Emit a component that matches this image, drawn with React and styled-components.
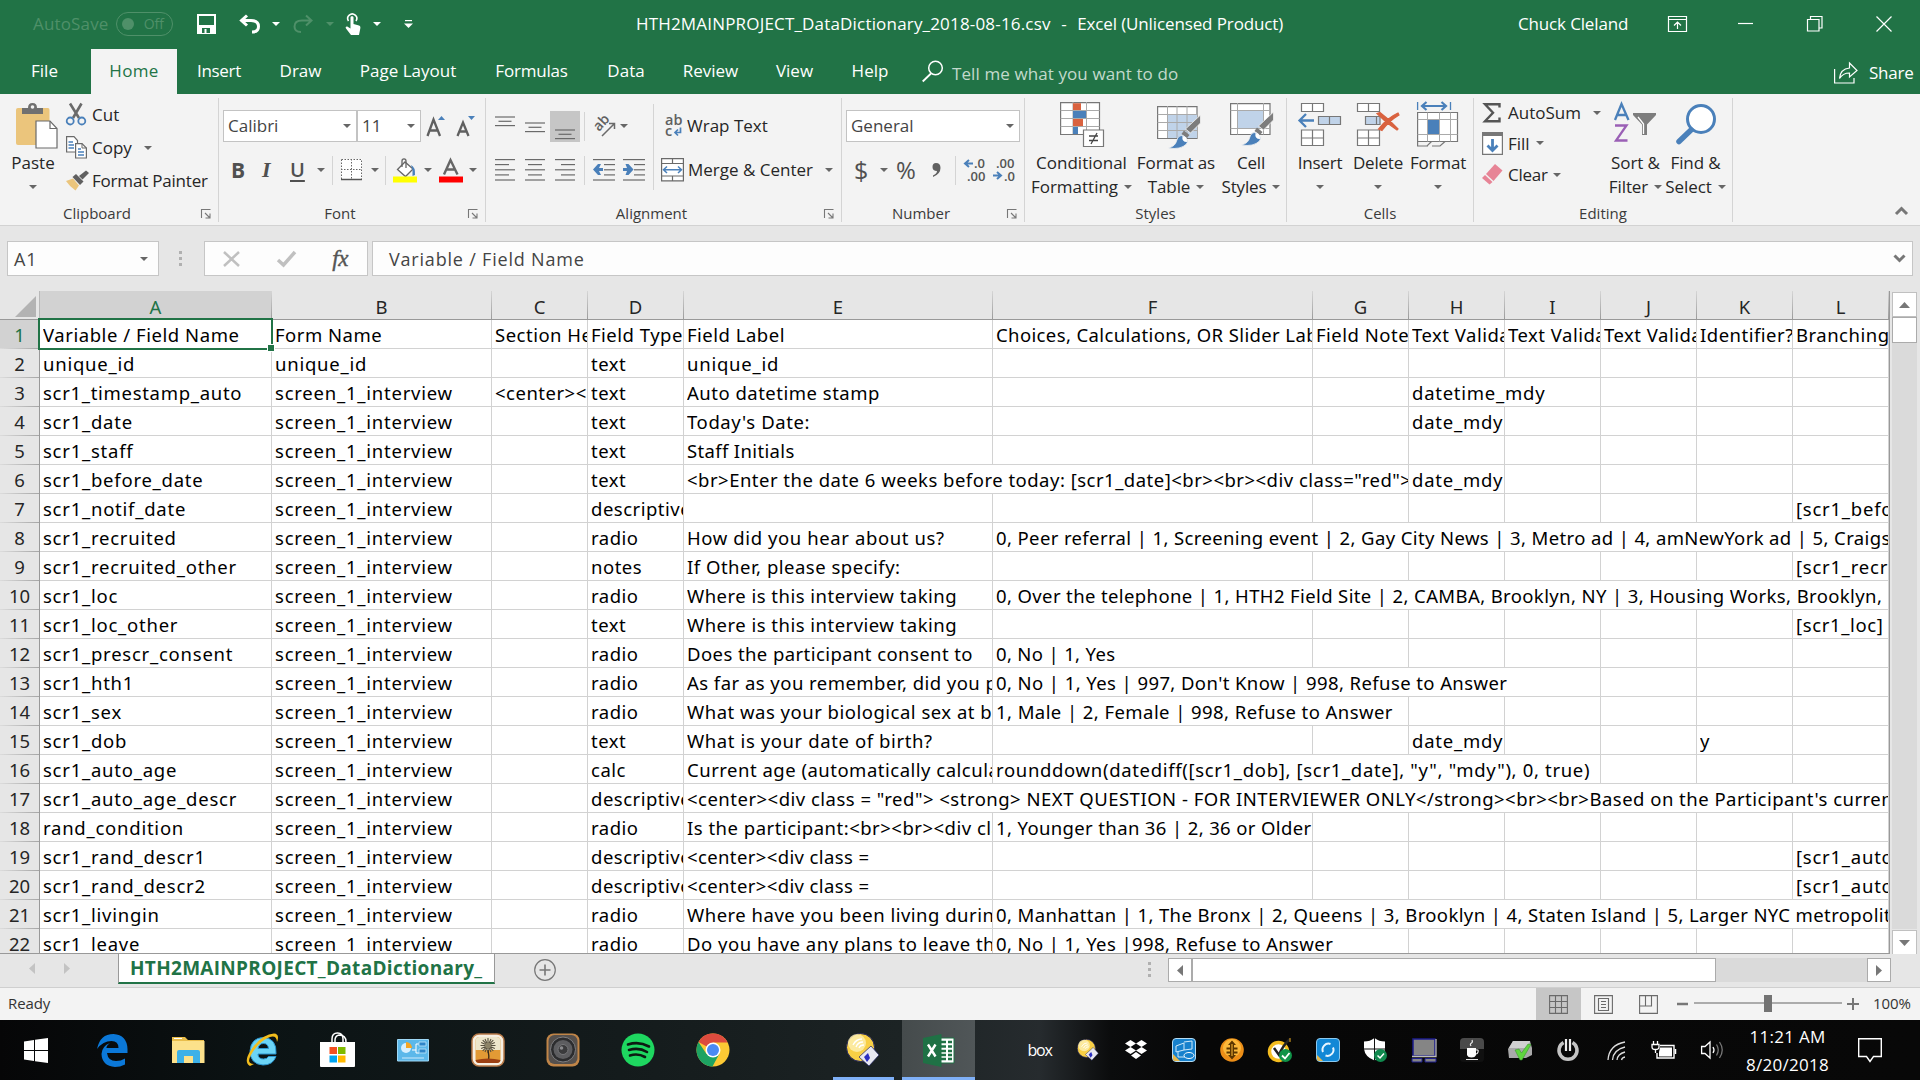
import React from "react";
import styled, { createGlobalStyle, css } from "styled-components";

const ui = '"Open Sans", "Noto Sans", sans-serif';
const cellFont = '"Noto Sans", "Open Sans", sans-serif';
const green = "#217346";
const gray = "#6a6a6a";
const blue = "#4a80ba";

const Global = createGlobalStyle`
  * { box-sizing: border-box; }
  body { margin: 0; background: #e6e6e6; overflow: hidden; }
  svg { display: block; flex: none; overflow: visible; }
`;

const Screen = styled.div`
  width: 1920px;
  height: 1080px;
  display: flex;
  flex-direction: column;
  font: 17px ${ui};
  color: #262626;
  white-space: pre;
  overflow: hidden;
`;

/* ---------- shared ---------- */
const Caret = styled.span`
  width: 0;
  height: 0;
  flex: none;
  border-left: 4px solid transparent;
  border-right: 4px solid transparent;
  border-top: 4px solid ${(p) => p.$color || "#666"};
`;

/* ---------- title bar ---------- */
const TitleBar = styled.header`
  height: 49px;
  background: ${green};
  color: #fff;
  display: grid;
  grid-template-columns: 33px 83px 81px 42px 33px 21px 33px 19px 28px 31px 232px 882px 150px 70px 69px 69px 44px;
  align-items: center;
  line-height: 24px;
  padding-bottom: 2px;
`;
const Faded = styled.span`
  color: #4f9069;
  font-size: 17px;
  letter-spacing: 0.15px;
`;
const Toggle = styled.span`
  width: 57px;
  height: 24px;
  border: 1.5px solid #4f9069;
  border-radius: 12px;
  color: #4f9069;
  font-size: 14px;
  line-height: 21px;
  display: flex;
  align-items: center;
  justify-content: space-between;
  padding: 0 8px 0 5px;
  &::before {
    content: "";
    width: 12px;
    height: 12px;
    border-radius: 50%;
    background: #4f9069;
  }
`;
const DocTitle = styled.span`
  display: flex;
  gap: 10.5px;
`;
const DocName = styled.span`
  letter-spacing: 0.18px;
`;
const Product = styled.span`
  letter-spacing: -0.12px;
`;
const UserName = styled.span`
  letter-spacing: -0.15px;
`;

/* ---------- tabs ---------- */
const TabBar = styled.nav`
  height: 45px;
  background: ${green};
  color: #fff;
  display: grid;
  grid-template-columns: 89px 2px 86px 84px 79px 136px 111px 78px 91px 77px 74px 15px 30px 882px 35px 51px;
  line-height: 44px;
`;
const Tab = styled.span`
  text-align: center;
  letter-spacing: ${(p) => p.$ls || 0}px;
  ${(p) => p.$active && css`background: #f3f3f3; color: ${green}; grid-column: 3;`}
`;
const SearchText = styled.span`
  color: #c3dacc;
  padding-top: 3px;
  letter-spacing: 0.1px;
`;
const TabIcon = styled.span`
  padding-top: ${(p) => p.$top}px;
`;
const Share = styled.span`
  padding-top: 2px;
  letter-spacing: -0.2px;
`;

/* ---------- ribbon ---------- */
const Ribbon = styled.section`
  height: 132px;
  background: #f3f3f3;
  border-bottom: 1px solid #d2d2d2;
  display: grid;
  grid-template-columns: 219px 267px 356px 183px 262px 187px 259px 187px;
  padding: 4px 0 3px;
`;
const Group = styled.div`
  border-right: 1px solid #d4d4d4;
  display: grid;
  grid-template-rows: 104px 20px;
`;
const GroupBody = styled.div`
  display: grid;
  grid-template-columns: ${(p) => p.$cols};
  min-width: 0;
`;
const GroupFoot = styled.div`
  display: grid;
  grid-template-columns: ${(p) => (p.$launch ? "1fr 17px" : "1fr")};
  font-size: 15px;
  line-height: 22px;
  text-align: center;
  color: #3b3b3b;
  svg { margin-top: 7px; }
`;
const GroupName = styled.span`
  padding-right: ${(p) => (p.$launch ? 7 : 0)}px;
`;
const LargeButton = styled.div`
  display: flex;
  flex-direction: column;
  align-items: center;
  line-height: 24px;
  letter-spacing: ${(p) => p.$ls || 0}px;
`;
const LargeIcon = styled.div`
  height: 53px;
  padding: ${(p) => p.$top || 5}px 0 0 ${(p) => p.$left || 0}px;
`;
const ButtonLine = styled.div`
  display: flex;
  align-items: center;
  gap: 6px;
  height: 24px;
`;
const SmallStack = styled.div`
  display: grid;
  grid-template-rows: ${(p) => p.$rows};
`;
const SmallButton = styled.div`
  display: grid;
  grid-template-columns: 26px max-content auto;
  align-items: center;
  justify-content: start;
  letter-spacing: ${(p) => p.$ls || 0}px;
`;
const PadCaret = styled.span`
  padding-left: ${(p) => p.$pad}px;
  display: flex;
`;
const ToolRows = styled.div`
  display: grid;
  grid-template-rows: 32px 30px;
  row-gap: 13px;
  padding-top: 12px;
  align-content: start;
`;
const ToolRow = styled.div`
  display: grid;
  grid-template-columns: ${(p) => p.$cols};
  align-items: center;
`;
const ToolText = styled.span`
  padding-bottom: 2px;
`;
const Combo = styled.div`
  height: 32px;
  border: 1px solid #c3c3c3;
  background: #fff;
  color: #444;
  display: flex;
  align-items: center;
  justify-content: space-between;
  line-height: 22px;
  padding: 0 5px 1px 4px;
`;
const Divider = styled.span`
  width: 1px;
  height: 29px;
  background: #d4d4d4;
`;
const Pressed = styled.span`
  width: 30px;
  height: 31px;
  background: #c6c6c6;
  display: flex;
  align-items: center;
  justify-content: center;
`;
const Glyph = styled.span`
  font: ${(p) => p.$font};
  color: #505050;
  line-height: 26px;
  ${(p) => p.$under && css`text-decoration: underline; text-underline-offset: 3px; text-decoration-thickness: 1.5px;`}
`;
const TallDivider = styled.div`
  margin-top: 6px;
  width: 1px;
  height: 86px;
  background: #d4d4d4;
`;
const Collapse = styled.div`
  display: flex;
  align-items: flex-end;
  justify-content: flex-end;
  padding: 0 12px 7px 0;
`;

/* ---------- formula bar ---------- */
const FormulaBar = styled.section`
  height: 65px;
  background: #e6e6e6;
  display: grid;
  grid-template-columns: 152px 45px 164px 4px 1541px;
  padding: 15px 0 15px 7px;
  color: #444;
`;
const FieldBox = styled.div`
  background: #fdfdfd;
  border: 1px solid #c6c6c6;
  display: flex;
  align-items: center;
  justify-content: ${(p) => p.$justify || "space-between"};
  padding: 0 ${(p) => p.$pr || 0}px 0 ${(p) => p.$pl || 0}px;
  font-size: 18px;
  letter-spacing: ${(p) => p.$ls || 0}px;
`;
const Dots = styled.div`
  display: flex;
  flex-direction: column;
  gap: 3px;
  padding: ${(p) => p.$pad};
  i { width: 3px; height: 3px; background: #b0b0b0; display: block; }
`;
const Fx = styled.span`
  font: italic 23px "Liberation Serif", serif;
  color: #555;
  letter-spacing: -0.5px;
  -webkit-text-stroke: 0.4px #555;
`;

/* ---------- sheet ---------- */
const columnTracks = "232px 220px 96px 96px 309px 320px 96px 96px 96px 96px 96px 96px";
const SheetArea = styled.section`
  height: 663px;
  display: grid;
  grid-template-columns: 1890px 27px;
  column-gap: 2px;
  background: #e6e6e6;
`;
const Sheet = styled.div`
  height: 663px;
  overflow: hidden;
  border-bottom: 1px solid #999;
  border-right: 1px solid #999;
`;
const HeadRow = styled.div`
  display: grid;
  grid-template-columns: 40px ${columnTracks};
  height: 29px;
  border-bottom: 1px solid #999;
`;
const Corner = styled.div`
  padding: 5px 0 0 15px;
  border-right: 1px solid #b8b8b8;
`;
const ColHead = styled.div`
  font: 18.5px/31px ${cellFont};
  height: 28px;
  text-align: center;
  color: ${(p) => (p.$active ? green : "#262626")};
  background: ${(p) => (p.$active ? "#d2d2d2" : "#e6e6e6")};
  border-right: 1px solid;
  border-image: linear-gradient(#d8d8d8, #999) 1;
`;
const SheetRow = styled.div`
  display: grid;
  grid-template-columns: 40px ${columnTracks};
  height: 29px;
`;
const RowHead = styled.div`
  font: 18.5px/29px ${cellFont};
  text-align: center;
  color: ${(p) => (p.$active ? green : "#262626")};
  background: ${(p) => (p.$active ? "#d2d2d2" : "#e6e6e6")};
  border-right: 1px solid #999;
  background-image: linear-gradient(90deg, #dcdcdc, #a6a6a6);
  background-size: 100% 1px;
  background-position: bottom;
  background-repeat: no-repeat;
`;
const Cell = styled.div`
  position: relative;
  grid-column: span ${(p) => p.$span};
  background: #fff;
  color: #000;
  border-right: 1px solid #d2d2d2;
  border-bottom: 1px solid #d2d2d2;
  font: 18.5px/28px ${cellFont};
  padding: 1px 0 0 3px;
  height: 29px;
  min-width: 0;
  letter-spacing: ${(p) => p.$ls}px;
`;
const Clip = styled.div`
  overflow: hidden;
  line-height: 27px;
  height: 27px;
`;
const Selection = styled.div`
  position: absolute;
  left: -2px;
  top: -2px;
  width: 235px;
  height: 32px;
  border: 2px solid ${green};
  z-index: 2;
  &::after {
    content: "";
    position: absolute;
    right: -3px;
    bottom: -3px;
    width: 6px;
    height: 6px;
    background: ${green};
    box-shadow: 0 0 0 1px #fff;
  }
`;
const VScroll = styled.div`
  display: flex;
  flex-direction: column;
  padding-top: 1px;
  width: 25px;
  height: 664px;
  background: linear-gradient(#dadada, #dadada) 0 26px / 100% 612px no-repeat;
`;
const ScrollBtn = styled.div`
  width: 25px;
  height: 25px;
  flex: none;
  border: 1px solid #c0c0c0;
  background: #fff;
  display: flex;
  align-items: center;
  justify-content: center;
`;
const VThumb = styled.div`
  height: 26px;
  border: 1px solid #ababab;
  background: #fff;
`;
const Spacer = styled.div`
  flex: 1;
`;

/* ---------- sheet tabs ---------- */
const SheetTabs = styled.section`
  height: 34px;
  border-bottom: 1px solid #cfcfcf;
  display: grid;
  grid-template-columns: 118px 377px 39px 614px 20px 24px 524px 151px 24px;
  background: #e6e6e6;
`;
const Arrows = styled.div`
  display: flex;
  gap: 29px;
  padding: 9px 0 0 29px;
`;
const SheetTab = styled.div`
  height: 30px;
  background: #fff;
  border-bottom: 2px solid ${green};
  border-left: 1px solid #999;
  border-right: 1px solid #999;
  color: ${green};
  font: 700 19px/29px ${ui};
  letter-spacing: 0.3px;
  padding-left: 11px;
  overflow: hidden;
`;
const AddSheet = styled.div`
  padding-top: 5px;
`;
const HPart = styled.div`
  margin-top: 4px;
  height: 24px;
  border: 1px solid ${(p) => (p.$track ? "#dadada" : "#ababab")};
  background: ${(p) => (p.$track ? "#dadada" : "#fff")};
  display: flex;
  align-items: center;
  justify-content: center;
`;

/* ---------- status ---------- */
const StatusBar = styled.footer`
  height: 32px;
  background: #f3f3f3;
  font-size: 15px;
  color: #333;
  display: grid;
  grid-template-columns: 1528px 45px 45px 45px 23px 148px 5px 20px auto;
  align-items: center;
  padding-left: 8px;
`;
const StatusText = styled.span`
  padding: 0 0 2px ${(p) => p.$left || 0}px;
  letter-spacing: -0.1px;
`;
const ViewButton = styled.div`
  height: 32px;
  display: flex;
  align-items: center;
  justify-content: center;
  background: ${(p) => (p.$active ? "#c6c6c6" : "transparent")};
`;
const Slider = styled.div`
  height: 2px;
  background: #ababab;
  margin-top: -2px;
  display: flex;
  align-items: center;
  justify-content: center;
  &::before { content: ""; width: 8px; height: 17px; background: #737373; }
`;
const ZoomMark = styled.span`
  justify-self: ${(p) => p.$at};
`;

/* ---------- taskbar ---------- */
const Taskbar = styled.footer`
  height: 60px;
  background: linear-gradient(90deg, #060607 0, #0b1314 260px, #141b1c 620px, #1c2324 900px, #262b2e 1040px, #0b0c0d 1110px, #070707 1200px, #080808 100%);
  display: grid;
  grid-template-columns: 72px 80px 73px repeat(10, 75px) 41px repeat(15, 48px) 103px 87px 1fr;
  color: #fff;
`;
const TaskItem = styled.div`
  display: flex;
  align-items: center;
  justify-content: center;
  background: ${(p) => (p.$active ? "linear-gradient(90deg,#454b4c,#505658)" : "transparent")};
  margin-left: ${(p) => (p.$active ? 2 : 0)}px;
  ${(p) => p.$open && css`
    background-image: linear-gradient(#7fb0f7, #7fb0f7);
    background-size: 61px 3px;
    background-position: 8px bottom;
    background-repeat: no-repeat;
  `}
  ${(p) => p.$active && css`border-bottom: 3px solid #7fb0f7; padding-top: 3px;`}
`;
const BoxMark = styled.span`
  font: 16px "Open Sans", sans-serif;
  letter-spacing: -1.2px;
  padding-right: 1px;
`;
const Clock = styled.div`
  text-align: center;
  font-size: 17px;
  line-height: 28px;
  padding-top: 3px;
  letter-spacing: 0.3px;
`;
const Notify = styled.div`
  display: flex;
  align-items: center;
  justify-content: flex-end;
  padding-right: 44px;
`;
const Peek = styled.div`
  border-left: 1px solid #5a5a5a;
  margin-left: 27px;
`;

/* ---------- icons ---------- */
const Svg = ({ w, h, children, ...r }) => (
  <svg width={w} height={h} viewBox={`0 0 ${w} ${h}`} fill="none" {...r}>{children}</svg>
);
const lines = (ys, xs, stroke = gray) => ys.map((y, i) => <path key={i} d={`M${xs[i][0]} ${y}H${xs[i][1]}`} stroke={stroke} strokeWidth="1.2" />);

const SaveIcon = () => <Svg w={19} h={20}><path d="M1 1H18V19H1Z" stroke="#fff" strokeWidth="2" /><path d="M1 11H18V19H1Z" fill="#fff" /><path d="M5 14H13V19H5Z" fill={green} /><path d="M7.5 15H9.500V19H7.500Z" fill="#fff" /></Svg>;
const UndoIcon = () => <Svg w={21} h={19}><path d="M8 1.500L2.500 6.500L8 11.500M3 6.500H12C17 6.500 19.500 9 19.500 12.500C19.500 16 17 18 13 18" stroke="#fff" strokeWidth="3" /></Svg>;
const RedoIcon = () => <Svg w={21} h={19}><path d="M13 1.500L18.500 6.500L13 11.500M18 6.500H9C4 6.500 1.500 9 1.500 12.500C1.500 16 4 18 8 18" stroke="#4f9069" strokeWidth="2" /></Svg>;
const HandIcon = () => <Svg w={16} h={22}><path d="M3.500 8A4.500 4.500 0 1 1 11 8" stroke="#fff" strokeWidth="1.600" /><path d="M5.500 4.500C5.500 2.800 8.500 2.800 8.500 4.500V11L14 12.500C15.500 13 15.500 14 15.300 15.500L14 22H6L1 15.500C0 14 1.500 13 3 14L5.500 15.500Z" fill="#fff" /></Svg>;
const CustomIcon = () => <Svg w={9} h={8}><path d="M1 .6H8" stroke="#fff" strokeWidth="1.200" /><path d="M0 3.500H9L4.500 8Z" fill="#fff" /></Svg>;
const DisplayIcon = () => <Svg w={19} h={16}><path d="M.5.500H18.500V15.500H.5ZM.5 3.500H18.500M9.500 13V6M6 9.500L9.500 6L13 9.500" stroke="#fff" strokeWidth="1.200" /></Svg>;
const MinIcon = () => <Svg w={15} h={2}><path d="M0 .5H15" stroke="#fff" strokeWidth="1.200" /></Svg>;
const RestoreIcon = () => <Svg w={16} h={16}><path d="M.5 3.500H12V15H.5ZM3.500 3.500V.5H15V12H12" stroke="#fff" strokeWidth="1.200" /></Svg>;
const CloseIcon = () => <Svg w={16} h={16}><path d="M.5.500L15.500 15.500M15.500.500L.5 15.500" stroke="#fff" strokeWidth="1.200" /></Svg>;
const SearchIcon = () => <Svg w={22} h={22}><circle cx="13.500" cy="8" r="6.800" stroke="#fff" strokeWidth="1.500" /><path d="M9 13.500L.7 21.500" stroke="#fff" strokeWidth="1.800" /></Svg>;
const ShareIcon = () => <Svg w={24} h={22}><path d="M.6 7V21H20V16" stroke="#fff" strokeWidth="1.200" /><path d="M5.500 16.500C6 10 10 6.500 15.500 6V1L23 8.500L15.500 15V11C11 11 8 12.500 5.500 16.500Z" stroke="#fff" strokeWidth="1.200" /></Svg>;

const PasteIcon = () => <Svg w={42} h={46}><path d="M2 5H32Q33.500 5 33.500 7V42H2Q0 42 0 40V7Q0 5 2 5Z" fill="#ebc57c" /><path d="M6 11V5H12Q12 0 16.500 0Q21 0 21 5H27V11Z" fill="#707070" /><circle cx="16.500" cy="4" r="1.800" fill="#f3f3f3" /><path d="M20 18H34L41 25.500V45H20Z" fill="#fff" stroke={gray} strokeWidth="1.200" /><path d="M34 18V25.500H41" stroke={gray} strokeWidth="1.200" /></Svg>;
const CutIcon = () => <Svg w={20} h={23}><path d="M4 .5L13 15M15.500 .5L7 15" stroke="#6a6a6a" strokeWidth="2.600" /><circle cx="4.200" cy="18" r="3.500" stroke={blue} strokeWidth="1.800" /><circle cx="15.800" cy="18" r="3.500" stroke={blue} strokeWidth="1.800" /></Svg>;
const CopyIcon = () => <Svg w={21} h={23}><path d="M.6.600H8L11.500 4.500V16H.6Z" fill="#fff" stroke={gray} strokeWidth="1.200" /><path d="M2.500 6H7M2.500 9H8M2.500 12H8" stroke={blue} strokeWidth="1.300" /><path d="M9.600 7.600H16L20.400 12V22H9.600Z" fill="#fff" stroke={gray} strokeWidth="1.200" /><path d="M16 7.600V12H20.400" stroke={gray} /><path d="M12 13H15M12 16H18M12 19H18" stroke={blue} strokeWidth="1.300" /></Svg>;
const PainterIcon = () => <Svg w={23} h={21}><path d="M0 11L7 8.500L13 15.500L9.500 20.500Q4 17 0 11Z" fill="#ebc57c" /><path d="M6.500 7L10 4L17.500 11.500L14 15Z" fill="#5f5f5f" /><path d="M13 6L20 .500L23 3L16.500 9.500Z" fill="#5f5f5f" /></Svg>;
const Launcher = () => <Svg w={10} h={10}><path d="M.5 9V.5H9.500M4 4L8.500 8.500M9 4.500V9H4.500" stroke="#777" strokeWidth="1.100" /></Svg>;

const GrowIcon = ({ small }) => <Svg w={20} h={22}><path d={small ? "M1.500 21L7 7.500L12.500 21M3.500 16.500H10.500" : "M1.500 21L7.500 4.500L14 21M3.500 15.500H12"} stroke="#606060" strokeWidth="2.300" /><path d={small ? "M12 1H19L15.500 5Z" : "M12 5H19L15.500 1Z"} fill={blue} /></Svg>;
const BorderIcon = () => <Svg w={21} h={22}><path d="M0 0H21V21H0Z" fill="#fff" /><path d="M.5.500H20.500V20M.5.500V20M10.500 0V20M0 10.500H20.500" stroke="#666" strokeDasharray="1.500 1.500" /><path d="M0 20.500H21" stroke="#555" strokeWidth="1.500" /></Svg>;
const BucketIcon = () => <Svg w={24} h={25}><path d="M4.500 11.500L12 4L20 11L12.500 18.500Z" fill="#fff" stroke="#666" strokeWidth="1.300" /><path d="M9 9V3Q9 .8 11 .8Q13 .8 13 3V10" stroke="#666" strokeWidth="1.300" /><path d="M18 7Q22.500 9 22 17L19.500 18V12Z" fill={blue} /><path d="M0 18.500H24V24.500H0Z" fill="#ffff00" /></Svg>;
const FontColorIcon = () => <Svg w={24} h={25}><path d="M5 16.500L11.500 2L18.500 16.500M7.500 11.500H16" stroke="#666" strokeWidth="2.400" /><path d="M0 18.500H24V24.500H0Z" fill="#ff0000" /></Svg>;

const VAlign = ({ off }) => <Svg w={20} h={22}>{lines([off, off + 4.3, off + 8.6], [[0, 20], [3.5, 16.500], [0, 20]])}</Svg>;
const HAlign = ({ kind }) => {
  const short = kind === "left" ? [0, 14] : kind === "right" ? [6, 20] : [3, 17];
  return <Svg w={20} h={22}>{lines([.6, 5.600, 10.800, 15.900, 21], [[0, 20], short, [0, 20], short, [0, 20]])}</Svg>;
};
const OrientIcon = () => <Svg w={22} h={21}><text x="0" y="0" transform="translate(5 16) rotate(-48)" fontSize="14" fontFamily="Open Sans, sans-serif" fontWeight="600" fill="#606060">ab</text><path d="M8 20L20 8M20.500 13V7.500H15" stroke={gray} strokeWidth="1.500" /></Svg>;
const IndentIcon = ({ right }) => <Svg w={22} h={22}>{lines([.6, 5.600, 10.800, 15.900, 21], [[0, 22], [11, 22], [11, 22], [11, 22], [0, 22]])}<path d={right ? "M0 9H4L2.500 5H5.500L10.500 10.500L5.500 16H2.500L4 12H0Z" : "M10 9H6L8 5H5L0 10.500L5 16H8L6 12H10Z"} fill={blue} /></Svg>;
const WrapIcon = () => <Svg w={18} h={24}><text x="0" y="10.500" fontSize="14.500" fontFamily="Open Sans, sans-serif" fontWeight="600" fill="#606060">ab</text><text x="0" y="22" fontSize="14.500" fontFamily="Open Sans, sans-serif" fontWeight="600" fill="#606060">c</text><path d="M15.500 13.500V18.500H10.500M13 15.500L10 18.500L13 21.500" stroke={blue} strokeWidth="1.700" /></Svg>;
const MergeIcon = () => <Svg w={23} h={24}><path d="M.6.600H22.400V22.800H.6ZM.6 5.500H22.400M.6 18H22.400M11.500 0V5.500M11.500 18V23" fill="#fff" stroke={gray} strokeWidth="1.200" /><path d="M2.500 11.700H20.500M6 8.500L2.500 11.700L6 15M17 8.500L20.500 11.700L17 15" stroke={blue} strokeWidth="1.500" /></Svg>;
const DecimalIcon = ({ dec }) => <Svg w={23} h={24} fontFamily="Open Sans, sans-serif" fontSize="13" fontWeight="600"><text x={dec ? 3 : 10} y="10" fill="#555">{dec ? ".00" : ".0"}</text><text x={dec ? 11 : 3} y="22.500" fill="#555">{dec ? ".0" : ".00"}</text>{dec ? <path d="M0 17.500H7M4 14L8 17.500L4 21" stroke={blue} strokeWidth="2" /> : <path d="M9 5.500H1M5 2L1 5.500L5 9" stroke={blue} strokeWidth="2" />}</Svg>;
const CommaIcon = () => <Svg w={9} h={14}><path d="M4 0Q8.500 0 8.500 5Q8.500 11 1 14V12.500Q5 10.500 5 8Q.5 8 .5 4Q.5 0 4 0Z" fill="#606060" /></Svg>;

const Brush = ({ x, y }) => <g transform={`translate(${x} ${y})`}><path d="M32 0V8L22 18L17 14Z" fill="#7d7d7d" stroke="#f3f3f3" strokeWidth=".8" /><path d="M15.500 15.500L21 20L18.500 23L13 19Z" fill="#7d7d7d" /><path d="M0 33Q7 31 8 26Q10 19 15 21Q21 25 18 29Q12 35 0 33Z" fill={blue} stroke="#f3f3f3" strokeWidth=".8" /><path d="M14 21Q19 21 18.500 27Q13 27 14 21Z" fill="#fff" /></g>;
const CondIcon = () => <Svg w={44} h={45}><path d="M.6.600H39.500V32.500H.6Z" fill="#fff" stroke="#777" strokeWidth="1.200" /><path d="M.6 8.500H39.500M.6 16.500H39.500M.6 24.500H39.500M13 0V32M26.500 0V32" stroke="#aaa" /><path d="M13 1.200H21V8H13ZM13 17H23V24H13Z" fill="#d9623f" /><path d="M13 9H26V16H13ZM13 25H18V32H13Z" fill={blue} /><path d="M23.500 28H43.500V44.500H23.500Z" fill="#fff" stroke="#777" strokeWidth="1.200" /><path d="M29 34H38M29 38.500H38M37 31L31 42" stroke="#444" strokeWidth="1.300" /></Svg>;
const TableIcon = () => <Svg w={44} h={43}><path d="M.6.600H40V32.500H.6Z" fill="#fff" stroke="#777" strokeWidth="1.200" /><path d="M11 8.500H40V32H11Z" fill="#c0d3e9" /><path d="M.6 8.500H40M.6 16.500H40M.6 24.500H40M10.500 0V32M20 0V32M30 0V32" stroke="#aaa" /><Brush x={11.500} y={9} /></Svg>;
const CellStyleIcon = () => <Svg w={44} h={43}><path d="M.6.600H40V31.500H.6Z" fill="#fff" stroke="#777" strokeWidth="1.200" /><path d="M7.500 7.500H33.500V25.500H7.500Z" fill="#c0d3e9" /><path d="M.6 7.500H40M.6 25.500H40M7.500 0V31.500M33.500 0V31.500" stroke="#aaa" /><Brush x={11.500} y={9} /></Svg>;
const InsertIcon = () => <Svg w={44} h={45}><path d="M3.500 1.500H25.500V9.500H3.500ZM14.500 1.500V9.500M3.500 28H25.500V43.500H3.500ZM14.500 28V43.500M3.500 36H25.500" fill="#fff" stroke="#777" strokeWidth="1.200" /><path d="M20.500 14.500H42.500V22.500H20.500ZM31.500 14.500V22.500" fill="#c0d3e9" stroke="#777" strokeWidth="1.200" /><path d="M16 18.500H1.500M8 12L1.500 18.500L8 25" stroke={blue} strokeWidth="2.300" /></Svg>;
const DeleteIcon = () => <Svg w={44} h={45}><path d="M1.500 1.500H23.500V9.500H1.500ZM12.500 1.500V9.500M1.500 28H23.500V43.500H1.500ZM12.500 28V43.500M1.500 36H23.500" fill="#fff" stroke="#777" strokeWidth="1.200" /><path d="M9.500 14.500H24V22.500H9.500ZM20.500 14.500V22.500" fill="#c0d3e9" stroke="#777" strokeWidth="1.200" /><path d="M21 11.500L24 10.500Q33 17 42 27L41 28Q30 21 21 11.500Z M42 11L43 13Q33 19 26 28.500L22.500 27Q31 16 42 11Z" fill="#d9623f" stroke="#d9623f" strokeWidth="1.200" /></Svg>;
const FormatIcon = () => <Svg w={42} h={46}><path d="M.6 0V8M33.500 0V8" stroke={blue} strokeWidth="1.300" /><path d="M5 4H29M9.500 0L5 4L9.500 8M24.500 0L29 4L24.500 8" stroke={blue} strokeWidth="2.200" /><path d="M.6 10.500H40.500V39.500H.6Z" fill="#fff" stroke="#777" strokeWidth="1.200" /><path d="M.6 17.500H40.500M.6 32.500H40.500M10.500 10.500V39.500M22.500 10.500V39.500M33.500 10.500V39.500" stroke="#aaa" /><path d="M11 18H22V32H11Z" fill={blue} /><path d="M.6 39.500V44H10L14.500 39.500M15 44H23L28 39.500M0 44H11" stroke="#777" strokeWidth="1.200" /></Svg>;
const SigmaIcon = () => <Svg w={19} h={20}><path d="M17.500 4.500V1.300H3L11 9.800L3 18.300H17.500V14.500" stroke="#555" strokeWidth="2.400" /></Svg>;
const FillIcon = () => <Svg w={21} h={23}><path d="M.6.600H20.400V22.400H.6Z" fill="#fff" stroke="#777" strokeWidth="1.200" /><path d="M0 0H21V4H0Z" fill="#777" /><path d="M10.500 7V18M5.500 13.500L10.500 18.500L15.500 13.500" stroke={blue} strokeWidth="2.800" /></Svg>;
const EraserIcon = () => <Svg w={21} h={21}><path d="M13 0L20.500 6.500L11.500 17L4 10Z" fill="#e78496" /><path d="M3 11L10.500 18L7.500 20.500L0 14Z" fill="#e78496" /></Svg>;
const SortIcon = () => <Svg w={43} h={40}><path d="M1 17L7.500 1L14.500 17M3.500 12H12" stroke={blue} strokeWidth="2.300" /><path d="M1 22.500H12.500L2 37.500H13.500" stroke="#9a5fb5" strokeWidth="2.300" /><path d="M19 10H42V12L33 21.500V32H28V21.500L19 12Z" fill="#7d7d7d" /><path d="M29.500 31V21L24 14" stroke="#fff" strokeWidth="1.300" /></Svg>;
const FindIcon = () => <Svg w={40} h={41}><circle cx="25" cy="15" r="13.500" fill="#fff" stroke={blue} strokeWidth="3" /><path d="M15 26L3 37.500" stroke={blue} strokeWidth="5.500" strokeLinecap="round" /></Svg>;

const Tri = ({ dir, color = "#777", s = 11 }) => {
  const d = { up: `M0 6H${s}L${s / 2} 0Z`, down: `M0 0H${s}L${s / 2} 6Z`, left: `M6 0V${s}L0 ${s / 2}Z`, right: `M0 0V${s}L6 ${s / 2}Z` }[dir];
  const v = dir === "up" || dir === "down";
  return <Svg w={v ? s : 6} h={v ? 6 : s}><path d={d} fill={color} /></Svg>;
};
const ChevronIcon = ({ up }) => <Svg w={13} h={9}><path d={up ? "M1 8L6.500 2.500L12 8" : "M1.500 1.500L6.500 6.500L11.500 1.500"} stroke="#777" strokeWidth="3" /></Svg>;

/* ---------- taskbar icons ---------- */
const DiskIcon = ({ s = 34 }) => <svg width={s} height={s} viewBox="0 0 34 34"><circle cx="14.500" cy="14.500" r="14" fill="#f8cf45" stroke="#1c2160" strokeWidth="1" /><circle cx="11" cy="10" r="9" fill="#fdf0b4" opacity=".8" /><path d="M7 12Q10 6 16 6M10 14Q12 9 17 9M13 15Q14 12 18 12" stroke="#fff" strokeWidth="1.300" fill="none" /><path d="M25 13L33 22L23 33L13 24Z" fill="#e8e8f0" stroke="#1c2160" strokeWidth=".7" /><path d="M18 24L22 20L24 25L21 29Z" fill="#2a2ec0" /></svg>;
const pinned = [
  <Svg w={24} h={25}><path d="M0 3.500L10 2V12H0ZM11 1.800L24 0V12H11ZM0 13H10V23L0 21.500ZM11 13H24V25L11 23.200Z" fill="#fff" /></Svg>,
  <Svg w={31} h={33}><path d="M0 15Q3 0 16.500 0Q30 1 30.500 15V19H10Q11 27 19 27Q24 27 28 24.500V30.500Q23 33 18 33Q5 32 4.500 20Q5 12 13 9Q9 12 9.500 14H21.500Q21.500 7 14.500 7Q6 7 0 15Z" fill="#0b78d8" /></Svg>,
  <Svg w={33} h={27}><path d="M0 0H13L16 3H32V26H0Z" fill="#e9bd4b" /><path d="M0 4H32.500V26H0Z" fill="#fce18b" /><path d="M5 26V15Q5 13 7 13H26Q28 13 28 15V26H21V19H12V26Z" fill="#3db1e8" /><path d="M2 1.500H10" stroke="#fff" strokeWidth="1" /></Svg>,
  <Svg w={36} h={36}><path d="M31 22H13Q13 27 18.500 27Q22 27 23.500 24.500H31Q28 33 18 33Q5 32 5 19Q6 6 18 5.500Q32 6 31 22ZM13 16.500H23.500Q23 11.500 18.500 11.500Q14 11.500 13 16.500Z" fill="#6bd4f6" stroke="#2a94cf" strokeWidth="1" /><path d="M5 34Q-2 30 6 18Q17 2 29 1.500Q35 2 32 10Q31.500 3 25 5Q14 9 6 23Q1 32 9 32Z" fill="#f2bd1d" /></Svg>,
  <Svg w={36} h={36}><path d="M12 12V7Q12 1 17.500 1Q23 1 23 7V12M15 10V8Q15 4 19 3Q26 3 26 10" stroke="#fff" strokeWidth="1.500" /><path d="M0 10H35V34Q35 35 34 35H1Q0 35 0 34Z" fill="#fff" /><path d="M9.500 15H17V22H9.500Z" fill="#f25022" /><path d="M18 15H25.500V22H18Z" fill="#7fba00" /><path d="M9.500 23.500H17V30.500H9.500Z" fill="#00a4ef" /><path d="M18 23.500H25.500V30.500H18Z" fill="#ffb900" /></Svg>,
  <Svg w={32} h={23}><path d="M.5.500H31.500V22H.5Z" fill="#5cb8ea" stroke="#9fd8f6" /><circle cx="9" cy="9" r="5" fill="#d8f0ff" /><path d="M9 9V3A6 6 0 0 1 15 9Z" fill="#f6a623" /><path d="M15 11H19M19 5V14H22M19 5H22" stroke="#fff" /><path d="M22 3H29V7H22ZM22 10H29V14H22Z" fill="#2f86c9" stroke="#a8daf5" /><path d="M5 19H27" stroke="#a8daf5" strokeWidth="1.500" /></Svg>,
  <Svg w={34} h={34}><rect x="1" y="1" width="32" height="32" rx="7" fill="#f7efe2" stroke="#b87a48" strokeWidth="1.500" /><rect x="4.500" y="4" width="25" height="26" rx="4" fill="#e39a35" /><path d="M4.500 17V8Q4.500 4 8.500 4H25.500Q29.500 4 29.500 8V17Z" fill="#eee6cb" /><g stroke="#57503f" strokeWidth="1.100"><path d="M17 5V20M9.500 12.500H24.500M11.700 7.200L22.300 17.800M22.300 7.200L11.700 17.800M14 6L20 19M20 6L14 19M10.200 9.500L23.800 15.500M10.200 15.500L23.800 9.500" /></g><circle cx="17" cy="12.500" r="3" fill="#8d8468" /><path d="M17 17Q18.500 23 17.500 30" stroke="#3a2a18" strokeWidth="1.300" /><path d="M4.500 27Q17 24 29.500 27Q29 30 26 30H8Q5 30 4.500 27Z" fill="#9c3f12" /></Svg>,
  <Svg w={34} h={34}><rect x=".5" y=".5" width="33" height="33" rx="7" fill="#c08548" /><rect x="2.500" y="2" width="29" height="29" rx="6" fill="#55504d" /><circle cx="17" cy="16.500" r="12.500" fill="#2c2c2e" stroke="#7d7d80" strokeWidth="1" /><circle cx="17" cy="16.500" r="9.500" fill="#5d5d60" /><circle cx="17" cy="16.500" r="5" fill="#3a3a3c" stroke="#77777a" /><circle cx="15.500" cy="15" r="1.800" fill="#8a8a8d" /></Svg>,
  <Svg w={34} h={34}><circle cx="17" cy="17" r="16.500" fill="#1ed760" /><path d="M7 11.500Q18 8 28 13.500M8 17Q18 14 26 19M9 22.500Q17 20 24 24" stroke="#0d1a12" strokeWidth="2.600" strokeLinecap="round" /></Svg>,
  <Svg w={34} h={34}><circle cx="17" cy="17" r="16.500" fill="#fcc934" /><path d="M17 17L2.500 9A16.500 16.500 0 0 1 31.500 9.500H17Z" fill="#dd4b3e" /><path d="M2.500 9A16.500 16.500 0 0 0 16.500 33.500L23.500 20.500L17 17L10.500 21Z" fill="#1da362" /><circle cx="17" cy="17" r="7.500" fill="#fff" /><circle cx="17" cy="17" r="6" fill="#4a8af4" /></Svg>,
  null,
  <DiskIcon />,
  <Svg w={32} h={33}><path d="M15 4H31V29H15Z" fill="#fff" stroke="#1f7145" /><path d="M18 8H23M25 8H29M18 12.500H23M25 12.500H29M18 17H23M25 17H29M18 21H23M25 21H29M18 25H23M25 25H29" stroke="#1f7145" strokeWidth="2.600" /><path d="M0 4L18.500 0V33L0 29Z" fill="#1f7145" /><path d="M5 10.500L12.500 22.500M12.500 10.500L5 22.500" stroke="#fff" strokeWidth="2.400" /></Svg>,
];
const tray = [
  <BoxMark>box</BoxMark>,
  <DiskIcon s={22} />,
  <Svg w={22} h={20}><path d="M5.500 0L11 3.500L5.500 7L0 3.500ZM16.500 0L22 3.500L16.500 7L11 3.500ZM5.500 7L11 10.500L5.500 14L0 10.500ZM16.500 7L22 10.500L16.500 14L11 10.500ZM11 12L16 15.500L11 19L6 15.500Z" fill="#fff" /></Svg>,
  <Svg w={24} h={24}><rect x=".5" y=".5" width="23" height="23" rx="3.500" fill="#1681cd" stroke="#b6dcf3" /><path d="M1 16L8 23H3Q1 23 1 21Z" fill="#e6b74a" /><path d="M4 8L12 5V12L4 14ZM12 4L20 3V11L12 12M6 14V19H13" stroke="#cfeafa" /><ellipse cx="17" cy="17.500" rx="5" ry="3" stroke="#fff" /></Svg>,
  <Svg w={24} h={24}><circle cx="12" cy="12" r="11.800" fill="#ec8e17" /><circle cx="12" cy="10" r="9" fill="#fbb83a" /><path d="M12 2.500L16 7H14V9.500H17.500V11.500H14V13.500H17.500V15.500H14V17H16L12 21.500L8 17H10V15.500H6.500V13.500H10V11.500H6.500V9.500H10V7H8Z" fill="#5a3600" /><path d="M12 6V18" stroke="#fbb83a" /></Svg>,
  <Svg w={24} h={24}><circle cx="10.500" cy="13.500" r="9" fill="#fff" stroke="#f5bd1f" strokeWidth="3.500" /><path d="M6 10L11 17Q15 7 22 1" stroke="#222" strokeWidth="2.500" /><path d="M22 0V4" stroke="#e4a51c" /><circle cx="17.500" cy="17.500" r="6.500" fill="#109348" /><path d="M14 17.500L17 20.500L21.500 15" stroke="#fff" strokeWidth="1.800" /></Svg>,
  <Svg w={24} h={24}><rect x=".5" y=".5" width="23" height="23" rx="3.500" fill="#1288d6" stroke="#8cc9ef" /><path d="M1 17L7 23H3Q1 23 1 21Z" fill="#e6b74a" /><path d="M7 14A6 6 0 0 1 14.500 6M17 9.500A6 6 0 0 1 9.500 17.500" stroke="#e9f6ff" strokeWidth="2" /></Svg>,
  <Svg w={24} h={24}><path d="M10.500 0Q15 3.500 21 3.500V11Q20 19 10.500 22.500Q1 19 0 11V3.500Q6 3.500 10.500 0Z" fill="#fff" /><path d="M10.500 0V23M0 11H21" stroke="#111" /><circle cx="16.500" cy="17.500" r="6.500" fill="#10894e" /><path d="M13.500 17.500L16 20L20 15.500" stroke="#fff" strokeWidth="1.500" /></Svg>,
  <Svg w={24} h={24}><path d="M1 1H23V18H1Z" fill="#858585" stroke="#1d1d8c" strokeWidth="1.500" /><path d="M0 18.500H24V1" stroke="#bbb" strokeWidth="1.300" /><path d="M0 20.500H10V24H0ZM13 20.500H24V24H13Z" fill="#858585" stroke="#1d1d8c" /></Svg>,
  <Svg w={24} h={24}><rect width="24" height="24" rx="3.500" fill="#101010" /><path d="M0 11V4Q0 0 4 0H20Q24 0 24 4V11Z" fill="#4a4a4a" /><path d="M7 10H16V17Q15 19.500 11.500 19.500Q8 19.500 7 17Z" fill="#fff" /><path d="M16 12Q19 11.500 18 14Q17.500 16 16 16M6 21.500H18M11 8Q9.500 6 11.500 5Q13 4 12 2" stroke="#e8e8e8" strokeWidth="1.200" /></Svg>,
  <Svg w={24} h={20}><path d="M5 1H22L24 8V15L18 18H1L0 9Z" fill="#a9a9a9" /><path d="M5 1H22L20 8H1Z" fill="#d0d0d0" /><path d="M7 10L11 9L13.500 13L20 4L23 4.500L14 20H12Z" fill="#5fd43f" stroke="#2f8f25" strokeWidth=".5" /></Svg>,
  <Svg w={22} h={22}><path d="M6.500 3.500A9 9 0 1 0 15.500 3.500" stroke="#c4c4c4" strokeWidth="3.500" /><path d="M9 0V12M13 0V12" stroke="#eee" strokeWidth="2.200" /></Svg>,
  <Svg w={19} h={19}><path d="M1 19Q2 4 18 1M5.500 19Q6 9 18 6M10 19Q10.500 13 18 11M14.500 19Q15 16.500 18 16" stroke="#ddd" strokeWidth="1.300" /></Svg>,
  <Svg w={24} h={18}><path d="M8 4.500H22V17H5V12" stroke="#fff" strokeWidth="1.400" /><path d="M8 6.500H20V15.500H7V11Z" fill="#fff" /><path d="M23.500 8V13" stroke="#fff" strokeWidth="1.500" /><path d="M1.500 0V3M5.500 0V3M0 3.500H7V6Q7 8.500 3.500 8.500Q0 8.500 0 6ZM3.500 8.500V12" stroke="#fff" strokeWidth="1.300" /></Svg>,
  <Svg w={23} h={20}><path d="M.6 6.500H4L9 2V18L4 13.500H.6Z" stroke="#fff" strokeWidth="1.300" /><path d="M12 7Q14 10 12 13" stroke="#fff" strokeWidth="1.300" /><path d="M15.500 4.500Q19 10 15.500 15.500M18.500 2Q24 10 18.500 18" stroke="#777" strokeWidth="1.300" /></Svg>,
];

/* ---------- data: [text, column span, letter spacing] ---------- */
const S = ["screen_1_interview", 1, 0.77];
const F0 = "";
const rows = [
  [["Variable / Field Name", 1, 0.55], "Form Name", "Section Header", "Field Type", "Field Label", ["Choices, Calculations, OR Slider Labels", 1, 0.38], "Field Note", "Text Validation", "Text Validation", "Text Validation", ["Identifier?", 1, 0.5], "Branching"],
  ["unique_id", "unique_id", F0, "text", "unique_id", F0, F0, F0, F0, F0, F0, F0],
  [["scr1_timestamp_auto", 1, 0.7], S, "<center><div", "text", "Auto datetime stamp", F0, F0, ["datetime_mdy", 2, 0.75], F0, F0, F0],
  ["scr1_date", S, F0, "text", ["Today's Date:", 1, 0.6], F0, F0, "date_mdy", F0, F0, F0, F0],
  ["scr1_staff", S, F0, "text", ["Staff Initials", 1, 0.35], F0, F0, F0, F0, F0, F0, F0],
  ["scr1_before_date", S, F0, "text", ['<br>Enter the date 6 weeks before today: [scr1_date]<br><br><div class="red">S', 3, 0.49], "date_mdy", F0, F0, F0, F0],
  ["scr1_notif_date", S, F0, "descriptive", F0, F0, F0, F0, F0, F0, F0, "[scr1_before"],
  ["scr1_recruited", S, F0, "radio", ["How did you hear about us?", 1, 0.6], ["0, Peer referral | 1, Screening event | 2, Gay City News | 3, Metro ad | 4, amNewYork ad | 5, Craigslist", 7, 0.38]],
  ["scr1_recruited_other", S, F0, "notes", "If Other, please specify:", F0, F0, F0, F0, F0, F0, "[scr1_recruit"],
  ["scr1_loc", S, F0, "radio", ["Where is this interview taking", 1, 0.48], ["0, Over the telephone | 1, HTH2 Field Site | 2, CAMBA, Brooklyn, NY | 3, Housing Works, Brooklyn,", 7, 0.38]],
  ["scr1_loc_other", S, F0, "text", ["Where is this interview taking", 1, 0.48], F0, F0, F0, F0, F0, F0, ["[scr1_loc]", 1, 0.62]],
  ["scr1_prescr_consent", S, F0, "radio", ["Does the participant consent to", 1, 0.42], ["0, No | 1, Yes", 1, 0.34], F0, F0, F0, F0, F0, F0],
  ["scr1_hth1", S, F0, "radio", ["As far as you remember, did you personally", 1, 0.46], ["0, No | 1, Yes | 997, Don't Know | 998, Refuse to Answer", 4, 0.41], F0, F0, F0],
  ["scr1_sex", S, F0, "radio", "What was your biological sex at birth", ["1, Male | 2, Female | 998, Refuse to Answer", 2, 0.43], F0, F0, F0, F0, F0],
  ["scr1_dob", S, F0, "text", ["What is your date of birth?", 1, 0.6], F0, F0, "date_mdy", F0, F0, "y", F0],
  ["scr1_auto_age", S, F0, "calc", "Current age (automatically calculated)", ['rounddown(datediff([scr1_dob], [scr1_date], "y", "mdy"), 0, true)', 4, 0.67], F0, F0, F0],
  ["scr1_auto_age_descr", S, F0, "descriptive", ["<center><div class = \"red\"> <strong> NEXT QUESTION - FOR INTERVIEWER ONLY</strong><br><br>Based on the Participant's current", 8, 0.49]],
  ["rand_condition", S, F0, "radio", "Is the participant:<br><br><div class", ["1, Younger than 36 | 2, 36 or Older", 1, 0.37], F0, F0, F0, F0, F0, F0],
  ["scr1_rand_descr1", S, F0, "descriptive", ["<center><div class =", 1, 0.38], F0, F0, F0, F0, F0, F0, "[scr1_auto_"],
  ["scr1_rand_descr2", S, F0, "descriptive", ["<center><div class =", 1, 0.38], F0, F0, F0, F0, F0, F0, "[scr1_auto_"],
  ["scr1_livingin", S, F0, "radio", "Where have you been living during", ["0, Manhattan | 1, The Bronx | 2, Queens | 3, Brooklyn | 4, Staten Island | 5, Larger NYC metropolitan", 7, 0.38]],
  ["scr1_leave", S, F0, "radio", "Do you have any plans to leave the", ["0, No | 1, Yes |998, Refuse to Answer", 2, 0.4], F0, F0, F0, F0, F0],
];
const tabs = [["File"], ["Home", 0.35], ["Insert", -0.3], ["Draw"], ["Page Layout"], ["Formulas", -0.2], ["Data"], ["Review"], ["View"], ["Help"]];

const DotCol = ({ pad }) => <Dots $pad={pad}><i /><i /><i /></Dots>;
const Foot = ({ children, launch }) => (
  <GroupFoot $launch={launch}><GroupName $launch={launch}>{children}</GroupName>{launch && <Launcher />}</GroupFoot>
);
const cellSpacing = (text, span) => (text.includes("_") && span === 1 ? 0.76 : 0.5);

export default function App() {
  return (
    <Screen>
      <Global />
      <TitleBar>
        <span />
        <Faded>AutoSave</Faded>
        <Toggle>Off</Toggle>
        <SaveIcon />
        <UndoIcon />
        <Caret $color="#fff" />
        <RedoIcon />
        <Caret $color="#4f9069" />
        <HandIcon />
        <Caret $color="#fff" />
        <CustomIcon />
        <DocTitle><DocName>HTH2MAINPROJECT_DataDictionary_2018-08-16.csv</DocName><span>-</span><Product>Excel (Unlicensed Product)</Product></DocTitle>
        <UserName>Chuck Cleland</UserName>
        <DisplayIcon />
        <MinIcon />
        <RestoreIcon />
        <CloseIcon />
      </TitleBar>

      <TabBar>
        {tabs.map(([t, ls]) => <Tab key={t} $ls={ls} $active={t === "Home"}>{t}</Tab>)}
        <span />
        <TabIcon $top={11}><SearchIcon /></TabIcon>
        <SearchText>Tell me what you want to do</SearchText>
        <TabIcon $top={13}><ShareIcon /></TabIcon>
        <Share>Share</Share>
      </TabBar>

      <Ribbon>
        <Group>
          <GroupBody $cols="66px 1fr">
            <LargeButton>
              <LargeIcon $left={7}><PasteIcon /></LargeIcon>
              <ButtonLine>Paste</ButtonLine>
              <ButtonLine><Caret /></ButtonLine>
            </LargeButton>
            <SmallStack $rows="33px 33px 33px">
              <SmallButton><CutIcon />Cut</SmallButton>
              <SmallButton><CopyIcon />Copy<PadCaret $pad={12}><Caret /></PadCaret></SmallButton>
              <SmallButton $ls={-0.2}><PainterIcon />Format Painter</SmallButton>
            </SmallStack>
          </GroupBody>
          <Foot launch>Clipboard</Foot>
        </Group>

        <Group>
          <ToolRows>
            <ToolRow $cols="4px 134px 64px 5px 30px 24px">
              <span /><Combo>Calibri<Caret /></Combo><Combo>11<Caret /></Combo><span /><GrowIcon /><GrowIcon small />
            </ToolRow>
            <ToolRow $cols="12px 31px 28px 27px 15px 9px 30px 14px 8px 31px 15px 30px 10px">
              <span />
              <Glyph $font='700 21px "Open Sans"'>B</Glyph>
              <Glyph $font='italic 700 22px "Liberation Serif"'>I</Glyph>
              <Glyph $font='600 20px "Open Sans"' $under>U</Glyph>
              <Caret /><Divider />
              <BorderIcon /><Caret /><Divider />
              <BucketIcon /><Caret /><FontColorIcon /><Caret />
            </ToolRow>
          </ToolRows>
          <Foot launch>Font</Foot>
        </Group>

        <Group>
          <GroupBody $cols="167px 7px 1fr">
            <ToolRows>
              <ToolRow $cols="9px 30px 25px 34px 10px 26px 8px">
                <span /><VAlign off={2} /><VAlign off={8} /><Pressed><VAlign off={15} /></Pressed><Divider /><OrientIcon /><Caret />
              </ToolRow>
              <ToolRow $cols="9px 30px 30px 29px 9px 30px 22px">
                <span /><HAlign kind="left" /><HAlign kind="center" /><HAlign kind="right" /><Divider /><IndentIcon /><IndentIcon right />
              </ToolRow>
            </ToolRows>
            <TallDivider />
            <ToolRows>
              <ToolRow $cols="5px 22px 80px"><span /><WrapIcon /><ToolText>Wrap Text</ToolText></ToolRow>
              <ToolRow $cols="1px 27px 137px 8px"><span /><MergeIcon /><ToolText>Merge & Center</ToolText><Caret /></ToolRow>
            </ToolRows>
          </GroupBody>
          <Foot launch>Alignment</Foot>
        </Group>

        <Group>
          <ToolRows>
            <ToolRow $cols="4px 174px"><span /><Combo>General<Caret /></Combo></ToolRow>
            <ToolRow $cols="12px 26px 16px 36px 23px 9px 29px 23px">
              <span />
              <Glyph $font='25px "Open Sans"'>$</Glyph><Caret />
              <Glyph $font='24px "Open Sans"'>%</Glyph>
              <CommaIcon />
              <Divider /><DecimalIcon /><DecimalIcon dec />
            </ToolRow>
          </ToolRows>
          <Foot launch>Number</Foot>
        </Group>

        <Group>
          <GroupBody $cols="5px 103px 86px 64px">
            <span />
            <LargeButton><LargeIcon $top={4}><CondIcon /></LargeIcon><ButtonLine>Conditional</ButtonLine><ButtonLine>Formatting<Caret /></ButtonLine></LargeButton>
            <LargeButton $ls={-0.1}><LargeIcon $top={8} $left={6}><TableIcon /></LargeIcon><ButtonLine>Format as</ButtonLine><ButtonLine>Table<Caret /></ButtonLine></LargeButton>
            <LargeButton $ls={-0.15}><LargeIcon $left={1}><CellStyleIcon /></LargeIcon><ButtonLine>Cell</ButtonLine><ButtonLine>Styles<Caret /></ButtonLine></LargeButton>
          </GroupBody>
          <Foot>Styles</Foot>
        </Group>

        <Group>
          <GroupBody $cols="4px 58px 58px 62px">
            <span />
            <LargeButton $ls={-0.2}><LargeIcon $top={4}><InsertIcon /></LargeIcon><ButtonLine>Insert</ButtonLine><ButtonLine><Caret /></ButtonLine></LargeButton>
            <LargeButton $ls={-0.2}><LargeIcon $top={4}><DeleteIcon /></LargeIcon><ButtonLine>Delete</ButtonLine><ButtonLine><Caret /></ButtonLine></LargeButton>
            <LargeButton $ls={-0.2}><LargeIcon $top={4}><FormatIcon /></LargeIcon><ButtonLine>Format</ButtonLine><ButtonLine><Caret /></ButtonLine></LargeButton>
          </GroupBody>
          <Foot>Cells</Foot>
        </Group>

        <Group>
          <GroupBody $cols="8px 124px 59px 61px">
            <span />
            <SmallStack $rows="29px 32px 31px">
              <SmallButton><SigmaIcon />AutoSum<PadCaret $pad={12}><Caret /></PadCaret></SmallButton>
              <SmallButton><FillIcon />Fill<PadCaret $pad={6}><Caret /></PadCaret></SmallButton>
              <SmallButton $ls={-0.25}><EraserIcon />Clear<PadCaret $pad={5}><Caret /></PadCaret></SmallButton>
            </SmallStack>
            <LargeButton $ls={-0.1}><LargeIcon><SortIcon /></LargeIcon><ButtonLine>Sort &</ButtonLine><ButtonLine>Filter<Caret /></ButtonLine></LargeButton>
            <LargeButton $ls={-0.1}><LargeIcon $top={6}><FindIcon /></LargeIcon><ButtonLine>Find &</ButtonLine><ButtonLine>Select<Caret /></ButtonLine></LargeButton>
          </GroupBody>
          <Foot>Editing</Foot>
        </Group>
        <Collapse><ChevronIcon up /></Collapse>
      </Ribbon>

      <FormulaBar>
        <FieldBox $pl={6} $pr={10} $ls={0.75}>A1<Caret /></FieldBox>
        <DotCol pad="10px 0 0 20px" />
        <FieldBox $justify="space-around" $pl={0} $pr={1}>
          <Svg w={18} h={16}><path d="M1 1L16 15M16 1L1 15" stroke="#c0c0c0" strokeWidth="2.500" /></Svg>
          <Svg w={19} h={16}><path d="M1 9L6.500 14L18 1" stroke="#c0c0c0" strokeWidth="3.500" /></Svg>
          <Fx>fx</Fx>
        </FieldBox>
        <span />
        <FieldBox $pl={16} $pr={6} $ls={0.8}>Variable / Field Name<ChevronIcon /></FieldBox>
      </FormulaBar>

      <SheetArea>
        <Sheet>
          <HeadRow>
            <Corner><Svg w={21} h={21}><path d="M21 0V21H0Z" fill="#b3b3b3" /></Svg></Corner>
            {"ABCDEFGHIJKL".split("").map((c) => <ColHead key={c} $active={c === "A"}>{c}</ColHead>)}
          </HeadRow>
          {rows.map((cells, r) => (
            <SheetRow key={r}>
              <RowHead $active={r === 0}>{r + 1}</RowHead>
              {cells.map((c, i) => {
                const [text, span = 1, ls] = Array.isArray(c) ? c : [c];
                return (
                  <Cell key={i} $span={span} $ls={ls === undefined ? cellSpacing(text, span) : ls}>
                    <Clip>{text}</Clip>
                    {r === 0 && i === 0 && <Selection />}
                  </Cell>
                );
              })}
            </SheetRow>
          ))}
        </Sheet>
        <VScroll>
          <ScrollBtn><Tri dir="up" /></ScrollBtn>
          <VThumb />
          <Spacer />
          <ScrollBtn><Tri dir="down" /></ScrollBtn>
        </VScroll>
      </SheetArea>

      <SheetTabs>
        <Arrows><Tri dir="left" color="#c3c3c3" /><Tri dir="right" color="#c3c3c3" /></Arrows>
        <SheetTab>HTH2MAINPROJECT_DataDictionary_</SheetTab>
        <span />
        <AddSheet><Svg w={22} h={22}><circle cx="11" cy="11" r="10.300" stroke="#777" strokeWidth="1.200" /><path d="M11 5.500V16.500M5.500 11H16.500" stroke="#777" strokeWidth="1.600" /></Svg></AddSheet>
        <DotCol pad="8px 0 0 0" />
        <HPart><Tri dir="left" /></HPart>
        <HPart />
        <HPart $track />
        <HPart><Tri dir="right" /></HPart>
      </SheetTabs>

      <StatusBar>
        <StatusText>Ready</StatusText>
        <ViewButton $active><Svg w={19} h={19}><path d="M.6.600H18.400V18.400H.6ZM.6 6.500H18.400M.6 12.500H18.400M6.500 0V19M12.500 0V19" stroke={gray} strokeWidth="1.100" /></Svg></ViewButton>
        <ViewButton><Svg w={19} h={19}><path d="M.6.600H18.400V18.400H.6ZM4.500 3.500H14.500V15.500H4.500ZM7 6.500H12M7 9.500H12M7 12.500H12" stroke={gray} strokeWidth="1.100" /></Svg></ViewButton>
        <ViewButton><Svg w={19} h={19}><path d="M.6.600H18.400V18.400H.6ZM.6 11H12.500V.6M6.500.600V11" stroke={gray} strokeWidth="1.100" /></Svg></ViewButton>
        <ZoomMark $at="center"><Svg w={11} h={3}><path d="M0 1H11" stroke="#777" strokeWidth="2.500" /></Svg></ZoomMark>
        <Slider />
        <span />
        <ZoomMark $at="start"><Svg w={12} h={12}><path d="M0 6H12M6 0V12" stroke="#777" strokeWidth="2" /></Svg></ZoomMark>
        <StatusText $left={6}>100%</StatusText>
      </StatusBar>

      <Taskbar>
        {pinned.map((ic, i) => <TaskItem key={i} $active={i === 12} $open={i === 11}>{ic}</TaskItem>)}
        <span />
        {tray.map((ic, i) => <TaskItem key={"t" + i}>{ic}</TaskItem>)}
        <Clock>11:21 AM{"\n"}8/20/2018</Clock>
        <Notify><Svg w={24} h={25}><path d="M.7.700H23.300V18.500H15.500L12 23.500L8.500 18.500H.7Z" stroke="#fff" strokeWidth="1.400" /></Svg></Notify>
        <Peek />
      </Taskbar>
    </Screen>
  );
}
